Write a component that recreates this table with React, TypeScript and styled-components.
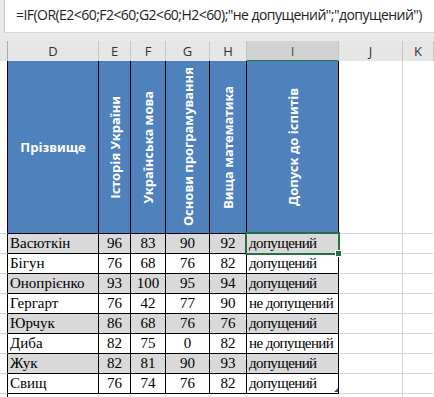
import React from 'react';
import styled, { createGlobalStyle } from 'styled-components';

const GlobalStyle = createGlobalStyle`
  html, body {
    margin: 0;
    padding: 0;
    background: #ffffff;
    overflow: hidden;
  }
`;

// ширини колонок: заголовок рядків, D..I, J, K
const COLS = '8px 91px 32px 35px 44px 37px 92px 64px 1fr';

const GRID = '#d4d4d4';
const LINE = '#000000';
const BLUE = '#4f81bd';
const GREEN = '#217346';

const Sheet = styled.div`
  position: relative;
  width: 434px;
  height: 397px;
  background: #ffffff;
  overflow: hidden;
`;

const Toolbar = styled.div`
  height: 41px;
  background: #e9e9e9;
  padding-left: 4px;
  box-sizing: border-box;
`;

const FormulaBar = styled.div`
  height: 33px;
  background: #ffffff;
  border-left: 1px solid #c8c8c8;
  border-bottom: 1px solid #d6d6d6;
  box-sizing: border-box;
  display: flex;
  align-items: center;
  padding: 0 0 4px 11px;
  font-family: 'Open Sans', 'Noto Sans', sans-serif;
  font-size: 14px;
  letter-spacing: -0.55px;
  color: #222;
  white-space: nowrap;
`;

const Row = styled.div<{ $h: number }>`
  display: grid;
  grid-template-columns: ${COLS};
  height: ${(p) => p.$h}px;
`;

const HeadCell = styled.div<{ $selected?: boolean; $edge?: boolean }>`
  box-sizing: border-box;
  background: ${(p) => (p.$selected ? '#d2d2d2' : '#e6e6e6')};
  border-right: 1px solid ${(p) => (p.$edge ? '#ababab' : '#c6c6c6')};
  border-bottom: ${(p) => (p.$selected ? `2px solid ${GREEN}` : '1px solid #ababab')};
  display: flex;
  align-items: center;
  justify-content: center;
  font-family: 'Open Sans', 'Noto Sans', sans-serif;
  font-size: 13px;
  color: ${(p) => (p.$selected ? '#1d5e3a' : '#333')};
  padding-top: ${(p) => (p.$selected ? 1 : 0)}px;
`;

type Edge = 'line' | 'grid' | 'none';

const edge = (e: Edge) => (e === 'line' ? LINE : e === 'grid' ? GRID : 'transparent');

const Cell = styled.div<{
  $bg?: string;
  $right: Edge;
  $bottom: Edge;
  $align?: 'left' | 'center';
  $tight?: boolean;
}>`
  box-sizing: border-box;
  background: ${(p) => p.$bg || '#ffffff'};
  border-right: 1px solid ${(p) => edge(p.$right)};
  border-bottom: 1px solid ${(p) => edge(p.$bottom)};
  display: flex;
  align-items: flex-end;
  justify-content: ${(p) => (p.$align === 'center' ? 'center' : 'flex-start')};
  padding: 0 0 1px ${(p) => (p.$align === 'center' ? 0 : 2)}px;
  font-family: 'Liberation Serif', 'Times New Roman', serif;
  font-size: 15px;
  line-height: 17px;
  letter-spacing: ${(p) => (p.$tight ? '-0.6px' : 'normal')};
  color: #000;
  white-space: nowrap;
  overflow: hidden;
`;

const TitleCell = styled.div`
  box-sizing: border-box;
  background: ${BLUE};
  border-right: 1px solid ${LINE};
  border-bottom: 1px solid ${LINE};
  display: flex;
  align-items: center;
  justify-content: center;
  font-family: 'Noto Sans', 'Open Sans', sans-serif;
  font-weight: 700;
  font-size: 13px;
  color: #ffffff;
  white-space: nowrap;
`;

const Vertical = styled.span`
  writing-mode: vertical-rl;
  transform: rotate(180deg);
`;

const Selection = styled.div`
  position: absolute;
  left: 245px;
  top: 232px;
  width: 95px;
  height: 23px;
  box-sizing: border-box;
  border: 2px solid ${GREEN};
  pointer-events: none;

  &::after {
    content: '';
    position: absolute;
    right: -4px;
    bottom: -4px;
    width: 5px;
    height: 5px;
    background: ${GREEN};
    border: 1px solid #ffffff;
  }
`;

const TableCorner = styled.div`
  position: absolute;
  left: 334px;
  top: 388px;
  width: 0;
  height: 0;
  border-left: 4px solid transparent;
  border-bottom: 4px solid #2f5597;
`;

const subjects = ['Історія України', 'Українська мова', 'Основи програмування', 'Вища математика'];

const students: [string, number, number, number, number][] = [
  ['Васюткін', 96, 83, 90, 92],
  ['Бігун', 76, 68, 76, 82],
  ['Онопрієнко', 93, 100, 95, 94],
  ['Гергарт', 76, 42, 77, 90],
  ['Юрчук', 86, 68, 76, 76],
  ['Диба', 82, 75, 0, 82],
  ['Жук', 82, 81, 90, 93],
  ['Свищ', 76, 74, 76, 82],
];

// та сама логіка, що й у формулі
const admit = (marks: number[]) => (marks.some((m) => m < 60) ? 'не допущений' : 'допущений');

export default function App() {
  return (
    <Sheet>
      <GlobalStyle />
      <Toolbar>
        <FormulaBar>=IF(OR(E2&lt;60;F2&lt;60;G2&lt;60;H2&lt;60);"не допущений";"допущений")</FormulaBar>
      </Toolbar>

      <Row $h={20}>
        <HeadCell $edge />
        {['D', 'E', 'F', 'G', 'H'].map((c) => (
          <HeadCell key={c}>{c}</HeadCell>
        ))}
        <HeadCell $selected>I</HeadCell>
        <HeadCell>J</HeadCell>
        <HeadCell>K</HeadCell>
      </Row>

      <Row $h={173}>
        <Cell $right="line" $bottom="grid" />
        <TitleCell>Прізвище</TitleCell>
        {subjects.map((s) => (
          <TitleCell key={s}>
            <Vertical>{s}</Vertical>
          </TitleCell>
        ))}
        <TitleCell>
          <Vertical>Допуск до іспитів</Vertical>
        </TitleCell>
        <Cell $right="grid" $bottom="grid" />
        <Cell $right="none" $bottom="grid" />
      </Row>

      {students.map(([name, ...marks], i) => {
        const bg = i % 2 === 0 ? '#d9d9d9' : '#ffffff';
        return (
          <Row $h={20} key={name}>
            <Cell $right="line" $bottom="grid" />
            <Cell $bg={bg} $right="line" $bottom="line">
              {name}
            </Cell>
            {marks.map((m, j) => (
              <Cell key={j} $bg={bg} $right="line" $bottom="line" $align="center">
                {m}
              </Cell>
            ))}
            <Cell $bg={bg} $right="line" $bottom="line" $tight>
              {admit(marks)}
            </Cell>
            <Cell $right="grid" $bottom="grid" />
            <Cell $right="none" $bottom="grid" />
          </Row>
        );
      })}

      <Row $h={10}>
        <Cell $right="line" $bottom="none" />
        <Cell $right="grid" $bottom="none" />
        <Cell $right="grid" $bottom="none" />
        <Cell $right="grid" $bottom="none" />
        <Cell $right="grid" $bottom="none" />
        <Cell $right="grid" $bottom="none" />
        <Cell $right="grid" $bottom="none" />
        <Cell $right="grid" $bottom="none" />
        <Cell $right="none" $bottom="none" />
      </Row>

      <Selection />
      <TableCorner />
    </Sheet>
  );
}
